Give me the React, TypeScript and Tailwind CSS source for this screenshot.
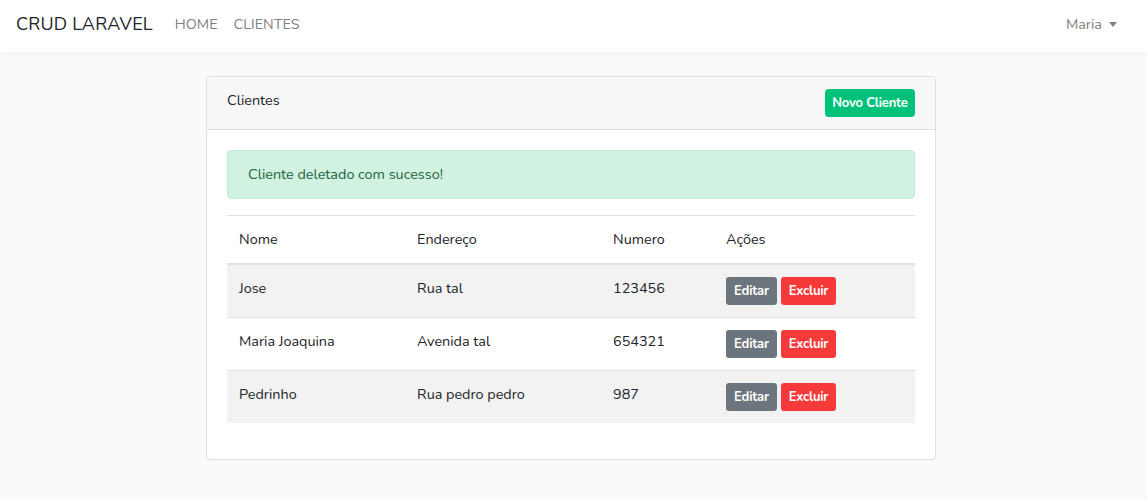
import React from "react";

const rows = [
  { nome: "Jose", end: "Rua tal", num: "123456" },
  { nome: "Maria Joaquina", end: "Avenida tal", num: "654321" },
  { nome: "Pedrinho", end: "Rua pedro pedro", num: "987" },
];

export default function App() {
  return (
    <div
      className="min-h-[500px] bg-[#f8fafc] text-[#212529] text-[14.4px] leading-[23px]"
      style={{ fontFamily: "Nunito, Lato, 'Open Sans', sans-serif" }}
    >
      <nav className="h-[52px] bg-white shadow-[0_2px_4px_rgba(0,0,0,0.04)] flex items-center pl-4 pr-[30px] pb-1">
        <span className="text-[18px] text-[#212529] tracking-[0.2px] mr-[22px]">CRUD LARAVEL</span>
        <span className="text-[#808080] mr-4">HOME</span>
        <span className="text-[#808080]">CLIENTES</span>
        <div className="ml-auto flex items-center text-[#808080]">
          <span>Maria</span>
          <span className="ml-[7px] inline-block w-0 h-0 border-l-[4.5px] border-r-[4.5px] border-t-[5px] border-l-transparent border-r-transparent border-t-[#808080]" />
        </div>
      </nav>
      <main className="flex justify-center pt-6 pr-[5px]">
        <div className="w-[730px] bg-white border border-[#dfdfe0] rounded-[4px] overflow-hidden">
          <div className="bg-[#f7f7f7] border-b border-[#dfdfe0] px-5 py-3 flex justify-between items-start">
            <span>Clientes</span>
            <button className="h-[28px] w-[90px] bg-[#00c17a] text-white text-[13px] font-bold tracking-[-0.2px] rounded-[4px] leading-[19px]">
              Novo Cliente
            </button>
          </div>
          <div className="p-5">
            <div className="bg-[#d1f1e1] border border-[#c0ebd5] text-[#1d643b] rounded-[4px] px-5 py-3 mb-4">
              Cliente deletado com sucesso!
            </div>
            <table className="w-full border-collapse mb-4">
              <thead>
                <tr className="border-t border-[#dee2e6] border-b-2 border-b-[#dee2e6]">
                  <th className="w-[178px] text-left font-normal p-3 align-top">Nome</th>
                  <th className="w-[196px] text-left font-normal p-3 align-top">Endereço</th>
                  <th className="w-[113px] text-left font-normal p-3 align-top">Numero</th>
                  <th className="text-left font-normal p-3 align-top">Ações</th>
                </tr>
              </thead>
              <tbody>
                {rows.map((r, i) => (
                  <tr
                    key={r.nome}
                    className={
                      (i > 0 ? "border-t border-[#dee2e6] " : "") +
                      (i % 2 === 0 ? "bg-[#f2f2f2]" : "bg-white")
                    }
                  >
                    <td className="p-3 align-top">{r.nome}</td>
                    <td className="p-3 align-top">{r.end}</td>
                    <td className="p-3 align-top">{r.num}</td>
                    <td className="p-3 align-top">
                      <div className="flex gap-1">
                        <button className="h-[28px] w-[51px] bg-[#6c757d] text-white text-[13px] font-bold tracking-[-0.2px] rounded-[3px] leading-[19px]">
                          Editar
                        </button>
                        <button className="h-[28px] w-[55px] bg-[#f63a3a] text-white text-[13px] font-bold tracking-[-0.2px] rounded-[3px] leading-[19px]">
                          Excluir
                        </button>
                      </div>
                    </td>
                  </tr>
                ))}
              </tbody>
            </table>
          </div>
        </div>
      </main>
    </div>
  );
}
